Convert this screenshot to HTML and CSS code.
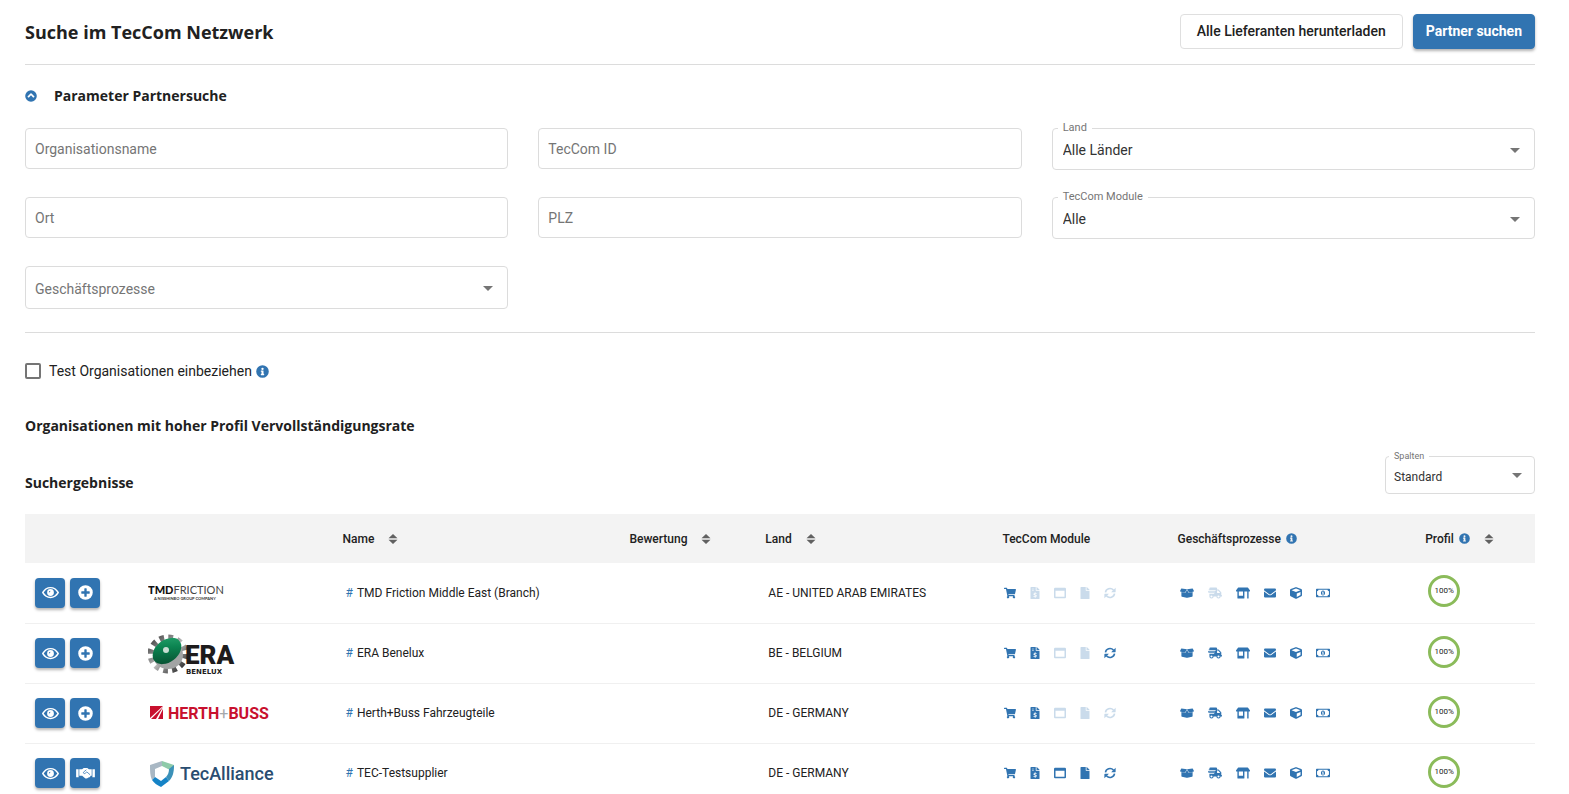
FILE: index.html
```html
<!DOCTYPE html>
<html lang="de">
<head>
<meta charset="utf-8">
<title>Suche im TecCom Netzwerk</title>
<link rel="stylesheet" href="styles.css">
</head>
<body>
<svg class="sprite" aria-hidden="true">
  <symbol id="i-eye" viewBox="0 0 576 512"><path fill-rule="evenodd" d="M288 64C168 64 70 130 4 240a32 32 0 0 0 0 32c66 110 164 176 284 176s218-66 284-176a32 32 0 0 0 0-32C506 130 408 64 288 64zm0 336c-94 0-174-50-232-144 58-94 138-144 232-144s174 50 232 144c-58 94-138 144-232 144z"/><path d="M288 140a116 116 0 1 0 0 232 116 116 0 0 0 0-232zm-58 108a58 58 0 0 1 56-56c-18 30 4 62-56 56z"/></symbol>
  <symbol id="i-plus" viewBox="0 0 512 512"><path fill-rule="evenodd" d="M256 8a248 248 0 1 0 0 496 248 248 0 0 0 0-496zm144 276a12 12 0 0 1-12 12h-92v92a12 12 0 0 1-12 12h-56a12 12 0 0 1-12-12v-92h-92a12 12 0 0 1-12-12v-56a12 12 0 0 1 12-12h92v-92a12 12 0 0 1 12-12h56a12 12 0 0 1 12 12v92h92a12 12 0 0 1 12 12z"/></symbol>
  <symbol id="i-shake" viewBox="0 0 640 512"><path d="M0 112h84v272H0zM556 112h84v272h-84zM108 112h96l56-40h120l56 40h96v224h-36c-12 40-44 60-80 60-30 40-90 44-120 12l-90-72h-98z"/><path fill="none" stroke="#3174b1" stroke-width="26" d="M350 128l-100 84c-14 40 30 62 60 36l56-46 110 96"/></symbol>
  <symbol id="i-chev" viewBox="0 0 512 512"><path fill-rule="evenodd" d="M8 256a248 248 0 1 0 496 0 248 248 0 0 0-496 0zm271-110 117 117a24 24 0 0 1 0 34l-19 19a24 24 0 0 1-34 0l-87-87-87 87a24 24 0 0 1-34 0l-19-19a24 24 0 0 1 0-34l117-117a33 33 0 0 1 46 0z"/></symbol>
  <symbol id="i-info" viewBox="0 0 512 512"><path fill-rule="evenodd" d="M256 8a248 248 0 1 0 0 496 248 248 0 0 0 0-496zm0 96a46 46 0 1 1 0 92 46 46 0 0 1 0-92zm66 284a12 12 0 0 1-12 12H202a12 12 0 0 1-12-12v-32a12 12 0 0 1 12-12h16v-76h-16a12 12 0 0 1-12-12v-32a12 12 0 0 1 12-12h82a12 12 0 0 1 12 12v120h14a12 12 0 0 1 12 12z"/></symbol>
  <symbol id="i-cart" viewBox="0 0 576 512"><path d="M528 301l47-208a24 24 0 0 0-23-29H159l-9-45A24 24 0 0 0 126 0H24A24 24 0 0 0 0 24v16a24 24 0 0 0 24 24h70l70 343a56 56 0 1 0 67 9h210a56 56 0 1 0 64-10l5-25a24 24 0 0 0-23-29H218l-7-32h293a24 24 0 0 0 24-19z"/></symbol>
  <symbol id="i-bill" viewBox="0 0 384 512"><path fill-rule="evenodd" d="M377 105L279 7a24 24 0 0 0-17-7h-6v128h128v-6a24 24 0 0 0-7-17zM224 136V0H24A24 24 0 0 0 0 24v464a24 24 0 0 0 24 24h336a24 24 0 0 0 24-24V160H248a24 24 0 0 1-24-24zM64 72h80v24H64zm0 64h80v24H64zm150 118h44v34h-72c-16 0-16 18-2 24l44 16c60 20 50 94-10 100v34h-36v-32h-54v-36h82c16 0 18-20 4-24l-48-16c-56-20-46-92 14-98v-34h34z"/></symbol>
  <symbol id="i-win" viewBox="0 0 512 512"><path fill-rule="evenodd" d="M464 32H48A48 48 0 0 0 0 80v352a48 48 0 0 0 48 48h416a48 48 0 0 0 48-48V80a48 48 0 0 0-48-48zm-16 384H64V160h384z"/></symbol>
  <symbol id="i-file" viewBox="0 0 384 512"><path d="M224 136V0H24A24 24 0 0 0 0 24v464a24 24 0 0 0 24 24h336a24 24 0 0 0 24-24V160H248a24 24 0 0 1-24-24zm160-14v6H256V0h6a24 24 0 0 1 17 7l98 98a24 24 0 0 1 7 17z"/></symbol>
  <symbol id="i-sync" viewBox="0 0 512 512"><path fill="none" stroke="currentColor" stroke-width="68" d="M62 226C84 80 280 0 412 138M450 286C428 432 232 512 100 374"/><path d="M496 30v172a20 20 0 0 1-20 20H304zM16 482V310a20 20 0 0 1 20-20h172z"/></symbol>
  <symbol id="i-box" viewBox="0 0 640 512"><path d="M425 256c-12 0-23-6-29-16l-76-126-76 126a34 34 0 0 1-38 15L64 215v178c0 15 10 28 24 31l216 54c10 3 21 3 31 0l217-54c14-3 24-16 24-31V215l-142 40-9 1zm213-96L587 58a17 17 0 0 0-17-9L320 81l92 152c4 6 11 9 18 7l198-56c10-3 15-14 10-24zM53 58L2 160c-5 10 0 21 10 24l198 56c7 2 14-1 18-7l92-152L70 49a16 16 0 0 0-17 9z"/></symbol>
  <symbol id="i-truck" viewBox="0 0 640 512"><path fill-rule="evenodd" d="M112 0h256a48 48 0 0 1 48 48v48h44c13 0 25 5 34 14l100 100c9 9 14 21 14 34v108h16a16 16 0 0 1 16 16v32a16 16 0 0 1-16 16h-48a96 96 0 0 1-192 0H256a96 96 0 0 1-192 0V288h220v-30H16v-34h300v-28H0v-34h348v-30H32V98h32V48A48 48 0 0 1 112 0zm48 464a48 48 0 1 0 0-96 48 48 0 0 0 0 96zm320 0a48 48 0 1 0 0-96 48 48 0 0 0 0 96zm80-208L460 144h-44v112z"/></symbol>
  <symbol id="i-store" viewBox="0 0 640 512"><path fill-rule="evenodd" d="M110 0h420a24 24 0 0 1 20 12l84 118c18 28-2 62-26 62H32c-28 0-44-34-26-62L90 12A24 24 0 0 1 110 0zM64 192h64v192h192V192h64v288a32 32 0 0 1-32 32H96a32 32 0 0 1-32-32zM512 192h64v304a16 16 0 0 1-16 16h-32a16 16 0 0 1-16-16z"/></symbol>
  <symbol id="i-mail" viewBox="0 0 512 512"><path d="M0 112a48 48 0 0 1 48-48h416a48 48 0 0 1 48 48v30L288 304a52 52 0 0 1-64 0L0 142zm0 76 204 150a88 88 0 0 0 104 0l204-150v212a48 48 0 0 1-48 48H48a48 48 0 0 1-48-48z"/></symbol>
  <symbol id="i-cube" viewBox="0 0 512 512"><path fill-rule="evenodd" d="M239 6L31 84A48 48 0 0 0 0 129v225c0 18 10 35 27 43l208 104c13 7 29 7 42 0l208-104c17-8 27-25 27-43V129c0-20-12-38-31-45L273 6a48 48 0 0 0-34 0zm17 62l192 72-192 78-192-78zm32 357V275l160-65v135z"/></symbol>
  <symbol id="i-cash" viewBox="0 0 640 512"><path fill-rule="evenodd" d="M32 64h576a32 32 0 0 1 32 32v320a32 32 0 0 1-32 32H32a32 32 0 0 1-32-32V96a32 32 0 0 1 32-32zm16 112v160a64 64 0 0 1 64 64h416a64 64 0 0 1 64-64V176a64 64 0 0 1-64-64H112a64 64 0 0 1-64 64z"/><path fill-rule="evenodd" d="M320 140c52 0 94 52 94 116s-42 116-94 116-94-52-94-116 42-116 94-116zm-10 50-34 22v24h24v58h-24v28h88v-28h-24V190z"/></symbol>
  <symbol id="i-sort" viewBox="0 0 10 12"><path d="M5 1 9.500 5.300H.5zM5 11 .5 6.700h9z"/></symbol>
  <symbol id="i-down" viewBox="0 0 10 5"><path d="M0 0h10L5 5z"/></symbol>
</svg>

<main class="page">
  <header class="topbar">
    <h1>Suche im TecCom Netzwerk</h1>
    <div class="topbar-actions">
      <button class="btn" type="button">Alle Lieferanten herunterladen</button>
      <button class="btn btn-primary" type="button">Partner suchen</button>
    </div>
  </header>

  <section class="params">
    <h2 class="params-title"><button class="collapse" type="button" aria-label="Einklappen"><svg><use href="#i-chev"/></svg></button>Parameter Partnersuche</h2>
    <form class="fields">
      <input class="control" type="text" placeholder="Organisationsname" aria-label="Organisationsname">
      <input class="control" type="text" placeholder="TecCom ID" aria-label="TecCom ID">
      <div class="field">
        <label for="land">Land</label>
        <select class="control" id="land"><option>Alle Länder</option></select>
        <svg class="arrow"><use href="#i-down"/></svg>
      </div>
      <input class="control" type="text" placeholder="Ort" aria-label="Ort">
      <input class="control" type="text" placeholder="PLZ" aria-label="PLZ">
      <div class="field">
        <label for="modul">TecCom Module</label>
        <select class="control" id="modul"><option>Alle</option></select>
        <svg class="arrow"><use href="#i-down"/></svg>
      </div>
      <div class="field">
        <select class="control empty" aria-label="Geschäftsprozesse"><option>Geschäftsprozesse</option></select>
        <svg class="arrow"><use href="#i-down"/></svg>
      </div>
    </form>
  </section>

  <div class="test-row">
    <input type="checkbox" id="test">
    <label for="test">Test Organisationen einbeziehen</label>
    <svg class="info"><use href="#i-info"/></svg>
  </div>

  <h2 class="section-title">Organisationen mit hoher Profil Vervollständigungsrate</h2>

  <div class="results-head">
    <h2>Suchergebnisse</h2>
    <div class="field field-small">
      <label for="spalten">Spalten</label>
      <select class="control" id="spalten"><option>Standard</option></select>
      <svg class="arrow"><use href="#i-down"/></svg>
    </div>
  </div>

  <table class="results">
    <colgroup><col class="c-act"><col class="c-logo"><col class="c-name"><col class="c-rate"><col class="c-land"><col class="c-mod"><col class="c-proc"><col class="c-prof"></colgroup>
    <thead>
      <tr>
        <th></th><th></th>
        <th><span class="th">Name <svg class="sort"><use href="#i-sort"/></svg></span></th>
        <th><span class="th">Bewertung <svg class="sort"><use href="#i-sort"/></svg></span></th>
        <th><span class="th">Land <svg class="sort"><use href="#i-sort"/></svg></span></th>
        <th>TecCom Module</th>
        <th><span class="th">Geschäftsprozesse <svg class="th-info"><use href="#i-info"/></svg></span></th>
        <th><span class="th">Profil <svg class="th-info"><use href="#i-info"/></svg> <svg class="sort"><use href="#i-sort"/></svg></span></th>
      </tr>
    </thead>
    <tbody>
      <tr>
        <td class="actions"><div class="acts"><button type="button" aria-label="Ansehen"><svg><use href="#i-eye"/></svg></button><button type="button" aria-label="Hinzufügen"><svg><use href="#i-plus"/></svg></button></div></td>
        <td><svg class="logo" viewBox="0 0 130 44"><text x="0" y="23" font-family="Lato" font-size="11" font-weight="900" fill="#111">TMD<tspan font-weight="400" fill="#444">FRICTION</tspan></text><text x="6" y="29" font-family="Lato" font-size="4" font-weight="700" fill="#333">A NISSHINBO GROUP COMPANY</text></svg></td>
        <td><a href="#tmd">#</a>TMD Friction Middle East (Branch)</td>
        <td></td>
        <td>AE - UNITED ARAB EMIRATES</td>
        <td class="icon-cell"><div class="icons"><svg><use href="#i-cart"/></svg><svg class="n off"><use href="#i-bill"/></svg><svg class="off"><use href="#i-win"/></svg><svg class="n off"><use href="#i-file"/></svg><svg class="off"><use href="#i-sync"/></svg></div></td>
        <td class="icon-cell"><div class="icons"><svg class="w"><use href="#i-box"/></svg><svg class="w off"><use href="#i-truck"/></svg><svg class="w"><use href="#i-store"/></svg><svg><use href="#i-mail"/></svg><svg><use href="#i-cube"/></svg><svg class="w"><use href="#i-cash"/></svg></div></td>
        <td><span class="ring">100%</span></td>
      </tr>
      <tr>
        <td class="actions"><div class="acts"><button type="button" aria-label="Ansehen"><svg><use href="#i-eye"/></svg></button><button type="button" aria-label="Hinzufügen"><svg><use href="#i-plus"/></svg></button></div></td>
        <td><svg class="logo" viewBox="0 0 130 44">
          <defs>
            <linearGradient id="g-era" x1="0" y1="1" x2="1" y2="0"><stop offset="0" stop-color="#06442a"/><stop offset=".6" stop-color="#0b8350"/><stop offset="1" stop-color="#2aa871"/></linearGradient>
            <linearGradient id="g-gear" x1="0" y1="0" x2="1" y2="1"><stop offset="0" stop-color="#444"/><stop offset=".5" stop-color="#b9b9b9"/><stop offset="1" stop-color="#222"/></linearGradient>
          </defs>
          <ellipse cx="20" cy="23" rx="17" ry="16" fill="none" stroke="url(#g-gear)" stroke-width="7" stroke-dasharray="4.500 4.120"/>
          <ellipse cx="20" cy="24" rx="15" ry="14" fill="#a2a4a4"/>
          <ellipse cx="19" cy="20" rx="16" ry="11" transform="rotate(-38 19 20)" fill="url(#g-era)"/>
          <circle cx="18" cy="19" r="3" fill="#c9dcd2"/>
          <text x="37" y="33" font-family="Roboto" font-size="26" font-weight="900" fill="#1d1b1c">ERA</text>
          <text x="38" y="43" font-family="DejaVu Sans" font-size="7" font-weight="700" fill="#1d1b1c">BENELUX</text></svg></td>
        <td><a href="#era">#</a>ERA Benelux</td>
        <td></td>
        <td>BE - BELGIUM</td>
        <td class="icon-cell"><div class="icons"><svg><use href="#i-cart"/></svg><svg class="n"><use href="#i-bill"/></svg><svg class="off"><use href="#i-win"/></svg><svg class="n off"><use href="#i-file"/></svg><svg><use href="#i-sync"/></svg></div></td>
        <td class="icon-cell"><div class="icons"><svg class="w"><use href="#i-box"/></svg><svg class="w"><use href="#i-truck"/></svg><svg class="w"><use href="#i-store"/></svg><svg><use href="#i-mail"/></svg><svg><use href="#i-cube"/></svg><svg class="w"><use href="#i-cash"/></svg></div></td>
        <td><span class="ring">100%</span></td>
      </tr>
      <tr>
        <td class="actions"><div class="acts"><button type="button" aria-label="Ansehen"><svg><use href="#i-eye"/></svg></button><button type="button" aria-label="Hinzufügen"><svg><use href="#i-plus"/></svg></button></div></td>
        <td><svg class="logo" viewBox="0 0 130 44"><path fill="#c8102e" d="M2 15h13L2 27zM3 28 15 16 8 28zM10 28l5-10v10z"/><text x="20" y="28" font-family="Roboto" font-size="16" font-weight="700" fill="#c8102e">HERTH<tspan fill="#a5a9ac" font-weight="400">+</tspan>BUSS</text></svg></td>
        <td><a href="#herth">#</a>Herth+Buss Fahrzeugteile</td>
        <td></td>
        <td>DE - GERMANY</td>
        <td class="icon-cell"><div class="icons"><svg><use href="#i-cart"/></svg><svg class="n"><use href="#i-bill"/></svg><svg class="off"><use href="#i-win"/></svg><svg class="n off"><use href="#i-file"/></svg><svg class="off"><use href="#i-sync"/></svg></div></td>
        <td class="icon-cell"><div class="icons"><svg class="w"><use href="#i-box"/></svg><svg class="w"><use href="#i-truck"/></svg><svg class="w"><use href="#i-store"/></svg><svg><use href="#i-mail"/></svg><svg><use href="#i-cube"/></svg><svg class="w"><use href="#i-cash"/></svg></div></td>
        <td><span class="ring">100%</span></td>
      </tr>
      <tr>
        <td class="actions"><div class="acts"><button type="button" aria-label="Ansehen"><svg><use href="#i-eye"/></svg></button><button type="button" aria-label="Partner"><svg class="wide"><use href="#i-shake"/></svg></button></div></td>
        <td><svg class="logo" viewBox="0 0 130 44"><path fill="#a9b8c4" d="M2 14 14 10v5l-7 3v8l-3 3C2 25 2 20 2 14z"/><path fill="#8ecaa9" d="M14 10l12 4-1 6-5-2-6-3z"/><path fill="#3b91b8" d="M26 14c0 7-1 12-5 16l-3-4c2-2 3-5 3-8z"/><path fill="#1583c6" d="M4 29l3-3 6 4 5-4 3 4-8 6c-4-2-7-4-9-7z"/><text x="32" y="29" font-family="Roboto" font-size="18" font-weight="500" fill="#2a4d70">TecAlliance</text></svg></td>
        <td><a href="#tec">#</a>TEC-Testsupplier</td>
        <td></td>
        <td>DE - GERMANY</td>
        <td class="icon-cell"><div class="icons"><svg><use href="#i-cart"/></svg><svg class="n"><use href="#i-bill"/></svg><svg><use href="#i-win"/></svg><svg class="n"><use href="#i-file"/></svg><svg><use href="#i-sync"/></svg></div></td>
        <td class="icon-cell"><div class="icons"><svg class="w"><use href="#i-box"/></svg><svg class="w"><use href="#i-truck"/></svg><svg class="w"><use href="#i-store"/></svg><svg><use href="#i-mail"/></svg><svg><use href="#i-cube"/></svg><svg class="w"><use href="#i-cash"/></svg></div></td>
        <td><span class="ring">100%</span></td>
      </tr>
    </tbody>
  </table>
</main>
</body>
</html>
```

FILE: styles.css
```css
* { box-sizing: border-box; }
body { margin: 0; background: #fff; color: #212121; font: 14px/20px Roboto, sans-serif; }
.sprite { display: none; }
svg { fill: currentColor; }
.page { padding: 0 34px 0 25px; }

h1, h2 { margin: 0; font-family: "Open Sans", sans-serif; font-weight: 700; }
h1 { font-size: 18px; line-height: 24px; }
h2 { font-size: 14px; line-height: 20px; }

.topbar { display: flex; justify-content: space-between; align-items: center; height: 65px; border-bottom: 1px solid #dcdcdc; }
.topbar-actions { display: flex; gap: 10px; padding-bottom: 2px; }
.btn { height: 35px; padding: 0 16px; border: 1px solid #dfdfdf; border-radius: 4px; background: #fff; color: #212121; font: 500 14px/20px Roboto, sans-serif; }
.btn-primary { padding: 0 12px; border-color: #3174b1; background: #3174b1; color: #fff; font-weight: 700; box-shadow: 0 2px 3px rgba(0, 0, 0, .3); }

.params { padding: 21px 0 23px; border-bottom: 1px solid #dcdcdc; }
.params-title { display: flex; align-items: center; gap: 17px; margin-bottom: 22px; }
.collapse { display: flex; padding: 0; border: 0; background: none; color: #3174b1; }
.collapse svg { width: 12px; height: 12px; }

.fields { display: grid; grid-template-columns: repeat(3, 1fr); gap: 27px 30px; align-items: start; }
.control { width: 100%; height: 42px; padding: 2px 10px 0; border: 1px solid #dcdcdc; border-radius: 4px; background: #fff; color: #333; font: 14px/20px Roboto, sans-serif; appearance: none; }
.control::placeholder { color: #757575; opacity: 1; }
input.control { height: 41px; padding: 0 9px; }
.control.empty { height: 43px; padding: 2px 9px 0; color: #757575; }
.field { position: relative; }
.field label { position: absolute; top: -7px; left: 6px; padding: 0 5px; background: #fff; color: #757575; font-size: 11px; line-height: 14px; }
.arrow { position: absolute; top: 20px; right: 15px; width: 10px; height: 5px; color: #757575; pointer-events: none; }

.test-row { display: flex; align-items: center; margin-top: 28px; }
.test-row input { width: 16px; height: 16px; margin: 0 8px 0 0; border: 2px solid #757575; border-radius: 2px; background: #fff; appearance: none; }
.info { width: 13px; height: 13px; margin-left: 4px; color: #3174b1; }

.section-title { margin-top: 35px; }
.results-head { display: flex; justify-content: space-between; align-items: center; margin-top: 20px; }
.results-head h2 { padding-top: 16px; }
.field-small { width: 150px; }
.field-small .control { height: 38px; padding: 3px 8px 0; font-size: 12px; }
.field-small label { left: 4px; font-size: 9px; clip-path: inset(3px 0 0 0); }
.field-small .arrow { top: 17px; right: 13px; }

.results { width: 100%; margin-top: 20px; border-collapse: collapse; table-layout: fixed; font-size: 12px; }
.c-act { width: 7.6%; }
.c-logo { width: 13.1%; }
.c-name { width: 19%; }
.c-rate { width: 9%; }
.c-land { width: 15.7%; }
.c-mod { width: 11.6%; }
.c-proc { width: 16.4%; }
.c-prof { width: 7.6%; }
.results th { height: 49px; padding: 0 0 0 5px; background: #f3f3f3; text-align: left; font-weight: 500; }
.th { display: flex; align-items: center; }
.sort { width: 10px; height: 12px; margin-left: 14px; color: #616161; }
.th-info { width: 11px; height: 11px; margin-left: 5px; color: #3174b1; }
.results td { height: 60px; padding: 0 0 0 8px; border-bottom: 1px solid #f0f0f0; }
.results td.actions { padding-left: 10px; }
.results td.icon-cell { padding-left: 7px; }
.results a { margin-right: 4px; color: #3174b1; text-decoration: none; }
.acts { display: flex; gap: 5px; }
.acts button { display: flex; align-items: center; justify-content: center; width: 30px; height: 30px; padding: 0; border: 0; border-radius: 4px; background: #3174b1; color: #fff; box-shadow: 0 2px 3px rgba(0, 0, 0, .3); }
.acts svg { width: 17px; height: 15px; }
.acts svg.wide { width: 19px; }
.logo { display: block; width: 130px; height: 44px; }
.icons { display: flex; align-items: center; gap: 14px; color: #3174b1; }
.icons svg { width: 12px; height: 12px; }
.icons .n { width: 10px; }
.icons .w { width: 14px; }
.icons .off { opacity: .25; }
.ring { display: flex; align-items: center; justify-content: center; width: 32px; height: 32px; margin-bottom: 3px; border: 3px solid #8bbb5a; border-radius: 50%; font-size: 8px; line-height: 10px; }
```
